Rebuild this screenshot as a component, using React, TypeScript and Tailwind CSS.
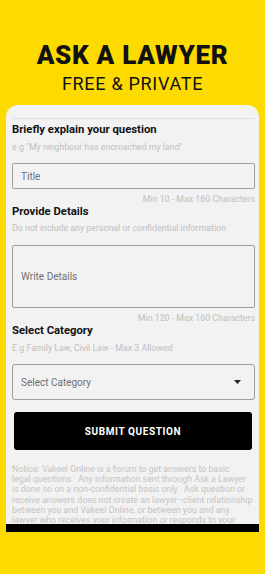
import React from 'react'

const font = { fontFamily: 'Roboto, "Noto Sans", sans-serif' }

function Hint({ children, right }: { children: React.ReactNode; right?: boolean }) {
  return (
    <p className={`text-[8.8px] leading-[12px] text-[#c0c0c0] ${right ? 'text-right' : ''}`}>{children}</p>
  )
}

function Label({ children }: { children: React.ReactNode }) {
  return <h2 className="text-[11.3px] leading-[14px] font-bold text-[#111]">{children}</h2>
}

const notice = [
  'Notice: Vakeel Online is a forum to get answers to basic',
  'legal questions.  Any information sent through Ask a Lawyer',
  'is done so on a non-confidential basis only.  Ask question or',
  'receive answers does not create an lawyer\u2013client relationship',
  'between you and Vakeel Online, or between you and any',
  'lawyer who receives your information or responds to your',
]

export default function App() {
  return (
    <div style={font} className="w-full h-[574px] bg-[#fedb00] overflow-hidden flex flex-col">
      {/* Header */}
      <div className="flex flex-col items-center pt-[41px]">
        <h1 className="text-[26px] leading-[28px] font-black text-[#111] tracking-[0.7px]">ASK A LAWYER</h1>
        <p className="mt-[3px] text-[18px] leading-[24px] text-[#111] tracking-[0.7px]">FREE &amp; PRIVATE</p>
      </div>

      {/* Form card */}
      <div className="mx-[6px] mt-[9px] h-[419px] rounded-t-[12px] bg-[#f2f2f2] overflow-hidden pl-[6px] pr-[4px]">
        <div className="mt-[13px] h-px bg-[#e0e0e0]" />

        <div className="mt-[4px]">
          <Label>Briefly explain your question</Label>
          <div className="mt-[4px]">
            <Hint>e.g "My neighbour has encroached my land"</Hint>
          </div>
          <div className="mt-[10px] h-[26px] border border-[#9e9e9e] rounded-[2px] flex items-center px-[8px] text-[10px] text-[#707070]">
            Title
          </div>
          <div className="mt-[4px]">
            <Hint right>Min 10 - Max 160 Characters</Hint>
          </div>
        </div>

        <div>
          <Label>Provide Details</Label>
          <div className="mt-[3px]">
            <Hint>Do not include any personal or confidential information</Hint>
          </div>
          <div className="mt-[11px] h-[63px] border border-[#9e9e9e] rounded-[2px] flex items-center px-[8px] text-[10px] text-[#707070]">
            Write Details
          </div>
          <div className="mt-[4px]">
            <Hint right>Min 120 - Max 160 Characters</Hint>
          </div>
        </div>

        <div>
          <Label>Select Category</Label>
          <div className="mt-[4px]">
            <Hint>E.g Family Law, Civil Law - Max 3 Allowed</Hint>
          </div>
          <div className="mt-[10px] h-[36px] border border-[#9e9e9e] rounded-[3px] flex items-center justify-between pl-[8px] pr-[13px] text-[10px] text-[#707070]">
            <span>Select Category</span>
            <svg width="7" height="4" viewBox="0 0 7 4" aria-hidden="true">
              <path d="M0 0h7L3.5 4z" fill="#222" />
            </svg>
          </div>
        </div>

        <button className="mt-[12px] ml-[2px] w-[calc(100%-5px)] h-[38px] bg-black rounded-[3px] text-white text-[10px] font-bold tracking-[0.6px]">
          SUBMIT QUESTION
        </button>

        <p className="mt-[14px] text-[8.8px] leading-[10.2px] text-[#c4c4c4] whitespace-pre">
          {notice.map((line, i) => (
            <span key={i} className="block">{line}</span>
          ))}
        </p>
      </div>
      <div className="mx-[6px] h-[8px] bg-black" />
    </div>
  )
}
